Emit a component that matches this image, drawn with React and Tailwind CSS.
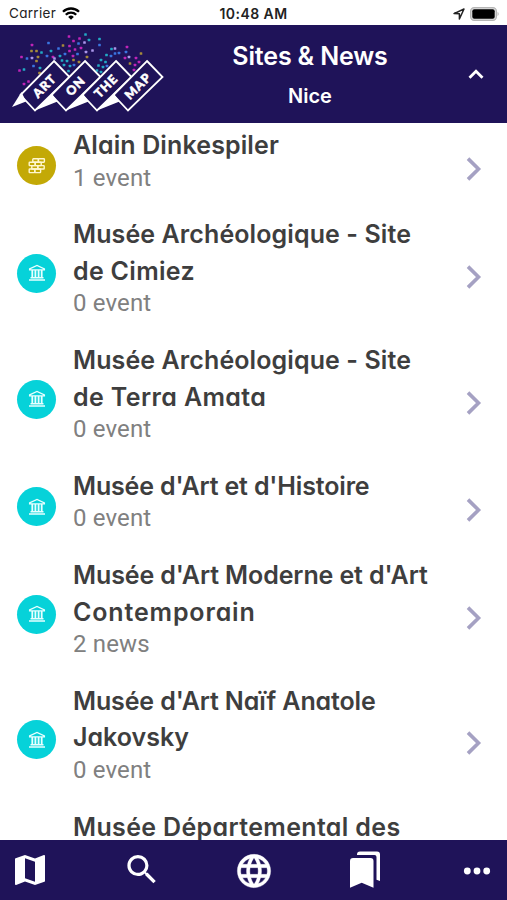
import React from 'react';

const C = { c: '#22a9c4', b: '#3a74e0', p: '#c024b8', y: '#a58a3a', l: '#ab97ea' };

// confetti above the logo: x, y, colour
const DOTS = [
  [32, 45, 'p'], [21.5, 57, 'p'], [19.5, 70.5, 'p'], [31.5, 51, 'y'], [36.5, 51, 'y'], [41.5, 52.5, 'c'], [27, 58.5, 'b'],
  [32, 58, 'l'], [38, 57, 'y'], [33.5, 66, 'b'], [24, 69.5, 'c'], [36.5, 61, 'y'], [40, 68, 'c'], [39.5, 73, 'y'], [24, 84, 'p'], [28.5, 81.5, 'p'],
  [48.5, 43, 'b'], [51, 51, 'c'], [53, 57, 'p'], [47, 56, 'b'], [54.5, 58.5, 'l'], [58.5, 48.5, 'b'], [63, 45.5, 'y'], [69, 36.5, 'p'],
  [69.5, 46, 'p'], [69.5, 51, 'p'], [60, 56, 'c'], [65, 54, 'b'], [62, 60.5, 'c'], [67, 61, 'c'], [64, 65, 'c'], [73.5, 41, 'p'],
  [79.5, 38.5, 'p'], [85.5, 34.5, 'c'], [89, 40, 'c'], [84.5, 42.5, 'l'], [78.5, 43.5, 'b'], [75, 49.5, 'p'], [81, 48, 'p'],
  [77.5, 54, 'b'], [73, 56, 'p'], [73.5, 60, 'y'], [79, 62, 'y'], [70, 66, 'c'], [68.5, 71, 'c'], [74, 65, 'b'], [86, 52, 'l'], [87, 57, 'y'],
  [92.5, 50.5, 'l'], [99.5, 39, 'c'], [99.5, 45, 'b'], [111.5, 49, 'c'], [115, 48.5, 'l'], [106.5, 55, 'c'], [111, 56, 'b'],
  [101, 60, 'c'], [105.5, 62, 'c'], [98.5, 65.5, 'c'], [103, 67, 'c'], [97, 70.5, 'c'], [101, 72, 'c'], [107, 66, 'b'],
  [127, 47, 'p'], [126, 52, 'b'], [115, 53.5, 'b'], [119, 53, 'b'], [141, 53.5, 'y'], [129, 57, 'l'], [136, 58, 'p'],
  [130, 63.5, 'y'], [135, 65, 'p'], [139, 62, 'p'], [134, 70, 'p'], [125, 58, 'p'],
];

const WORDS = [['ART', 44.5], ['ON', 75.5], ['THE', 106], ['MAP', 138]];

const Logo = () => (
  <svg viewBox="0 25 180 98" className="w-[180px] h-[98px] shrink-0">
    {DOTS.map(([x, y, c], i) => (
      <rect key={i} x={x - 1.3} y={y - 1.3} width="2.6" height="2.6" rx=".6" fill={C[c]} />
    ))}
    {[0, 31, 62, 93].map((dx) => (
      <g key={dx} transform={`translate(${dx} 0)`}>
        <path d="M54 61 69.5 77 35 110.5 20.5 95Z" fill="#1f1359" stroke="#fff" strokeWidth="1.8" />
      </g>
    ))}
    <path d="M12 107 21.5 92 26 101.5Z" fill="#fff" />
    {[31, 62, 93].map((dx) => (
      <path key={dx} d="M4 110.5 21 94 26.5 101.5Z" transform={`translate(${dx} 0)`} fill="#fff" />
    ))}
    {WORDS.map(([word, x]) => (
      <text
        key={word}
        transform={`translate(${x} 86) rotate(-45)`}
        y="4.4"
        textAnchor="middle"
        fill="#fff"
        stroke="#fff"
        strokeWidth=".5"
        className="font-['Lato'] font-black text-[12.5px] tracking-[1px]"
      >
        {word}
      </text>
    ))}
  </svg>
);

const MuseumIcon = () => (
  <svg viewBox="0 0 18 18" className="w-[18px] h-[18px]" fill="none" stroke="#e8ffff" strokeWidth="1.3">
    <path d="M1.6 4.9 9 1.5l7.4 3.4v.9H1.6Z" />
    <path d="M4.3 6v7.5M7.4 6v7.5M10.6 6v7.5M13.7 6v7.5" strokeWidth="1.8" />
    <path d="M2.5 13.8h13M1 16h16" strokeWidth="1.6" />
  </svg>
);

const BricksIcon = () => (
  <svg viewBox="0 0 18 18" className="w-[18px] h-[18px]" fill="none" stroke="#fff7cf" strokeWidth="1.4">
    <rect x="4.8" y="1.8" width="5.6" height="3.4" rx=".6" />
    <rect x="10.4" y="1.8" width="6" height="3.4" rx=".6" />
    <rect x="1.2" y="5.2" width="6" height="3.4" rx=".6" />
    <rect x="7.2" y="5.2" width="6" height="3.4" rx=".6" />
    <rect x="3.8" y="8.6" width="6" height="3.4" rx=".6" />
    <rect x="9.8" y="8.6" width="6.4" height="3.4" rx=".6" />
    <rect x="1.2" y="12" width="5.6" height="3.6" rx=".6" />
    <rect x="6.8" y="12" width="5.8" height="3.6" rx=".6" />
  </svg>
);

const SITES = [
  { lines: [['Alain Dinkespiler', 'tracking-[0.12px]']], sub: '1 event', artist: true },
  { lines: [['Musée Archéologique - Site', 'tracking-[0.1px]'], ['de Cimiez', 'tracking-[0.3px]']], sub: '0 event' },
  { lines: [['Musée Archéologique - Site', 'tracking-[0.1px]'], ['de Terra Amata', 'tracking-[0.38px]']], sub: '0 event' },
  { lines: [["Musée d'Art et d'Histoire", 'tracking-[-0.16px]']], sub: '0 event' },
  { lines: [["Musée d'Art Moderne et d'Art", 'tracking-[-0.11px]'], ['Contemporain', 'tracking-[0.85px]']], sub: '2 news' },
  { lines: [["Musée d'Art Naïf Anatole", 'tracking-[-0.13px]'], ['Jakovsky', 'tracking-[0px]']], sub: '0 event' },
];

const TitleLine = ({ text, tracking }) => (
  <div className="h-[36.5px] leading-[36.5px]">
    <span className={`text-[25px] font-semibold text-[#3e3e3e] ${tracking}`}>{text}</span>
  </div>
);

const SiteRow = ({ site }) => (
  <li className="flex items-center pl-[17px] pr-[25px] py-[11.4px]">
    <div className={`w-[39px] h-[39px] mt-[11px] rounded-full flex items-center justify-center shrink-0 ${site.artist ? 'bg-[#c3a906]' : 'bg-[#06d2d9]'}`}>
      {site.artist ? <BricksIcon /> : <MuseumIcon />}
    </div>
    <div className="ml-[17px] flex-1 whitespace-nowrap">
      {site.lines.map(([text, tracking]) => (
        <TitleLine key={text} text={text} tracking={tracking} />
      ))}
      <div className="h-[30px] leading-[29px] font-['Roboto'] text-[24px] tracking-[0.15px] text-[#808080]">{site.sub}</div>
    </div>
    <svg viewBox="0 0 16 24" className="w-4 h-6 mt-[18px] shrink-0" fill="none" stroke="#a5a1c3" strokeWidth="3.6">
      <path d="M2 1.6 12.5 12 2 22.4" />
    </svg>
  </li>
);

const StatusBar = () => (
  <div className="h-[25px] bg-white shrink-0 grid grid-cols-3 items-center px-[9px] pt-[2px] text-[13.5px] text-[#222]">
    <div className="flex items-center gap-[6px]">
      <span className="tracking-[0.3px]">Carrier</span>
      <svg viewBox="0 0 18 13" className="w-[18px] h-[13px]" fill="none" stroke="#000" strokeWidth="2.3">
        <path d="M1 4.8a11.4 11.4 0 0 1 16 0M3.8 7.8a7.4 7.4 0 0 1 10.4 0" />
        <path d="M9 12.8 6.2 9.9a4 4 0 0 1 5.6 0Z" fill="#000" stroke="none" />
      </svg>
    </div>
    <span className="text-center text-[14px] font-semibold tracking-[0.45px]">10:48 AM</span>
    <div className="flex items-center justify-end gap-[5px] -mr-[2px]">
      <svg viewBox="0 0 12 12" className="w-3 h-3" fill="none" stroke="#222" strokeWidth="1.5" strokeLinejoin="round">
        <path d="M11 1 6.4 11V5.8L1 5.6Z" />
      </svg>
      <svg viewBox="0 0 30 14" className="w-[30px] h-[14px]">
        <rect x=".6" y=".6" width="25.8" height="12.8" rx="3.6" fill="#ddd" stroke="#b5b5b5" strokeWidth="1.2" />
        <rect x="2.3" y="2.3" width="22.4" height="9.4" rx="2" fill="#000" />
        <path d="M27.6 4.8q2 2.2 0 4.4Z" fill="#aaa" />
      </svg>
    </div>
  </div>
);

const Header = () => (
  <header className="h-[98px] bg-[#1f1359] shrink-0 flex items-center text-white">
    <Logo />
    <div className="w-[260px] flex flex-col items-center font-semibold pt-[3px]">
      <h1 className="text-[25px] leading-[38px] tracking-[-0.15px]">Sites &amp; News</h1>
      <h2 className="text-[20px] leading-[38px] mt-[2px] tracking-[0px]">Nice</h2>
    </div>
    <svg viewBox="0 0 16 10" className="w-4 h-[10px] ml-[28px]" fill="none" stroke="#fff" strokeWidth="2.8">
      <path d="M1.5 8.7 8 2.2l6.5 6.5" />
    </svg>
  </header>
);

const NavBar = () => (
  <nav className="h-[60px] bg-[#1f1359] shrink-0 flex items-center justify-between px-[10px]">
    <svg viewBox="0 0 24 24" className="w-10 h-10" fill="#fff">
      <path d="m20.5 3-.16.03L15 5.1 9 3 3.36 4.9c-.21.07-.36.25-.36.48V20.5c0 .28.22.5.5.5l.16-.03L9 18.9l6 2.1 5.64-1.9c.21-.07.36-.25.36-.48V3.5c0-.28-.22-.5-.5-.5zM15 19l-6-2.11V5l6 2.11V19z" />
    </svg>
    <svg viewBox="0 0 24 24" className="w-10 h-[39px] -mt-[2px]" fill="#fff">
      <path d="M15.5 14h-.79l-.28-.27A6.47 6.47 0 0 0 16 9.5 6.5 6.5 0 1 0 9.5 16c1.61 0 3.09-.59 4.23-1.57l.27.28v.79l5 4.99L20.49 19l-4.99-5zm-6 0C7.01 14 5 11.99 5 9.5S7.01 5 9.5 5 14 7.01 14 9.5 11.99 14 9.5 14z" />
    </svg>
    <svg viewBox="0 0 24 24" className="w-10 h-10 mt-[1px]" fill="#fff" stroke="#fff" strokeWidth=".2">
      <path d="M11.99 2C6.47 2 2 6.48 2 12s4.47 10 9.99 10C17.52 22 22 17.52 22 12S17.52 2 11.99 2zm6.93 6h-2.95a15.65 15.65 0 0 0-1.38-3.56A8.03 8.03 0 0 1 18.92 8zM12 4.04c.83 1.2 1.48 2.53 1.91 3.96h-3.82c.43-1.43 1.08-2.76 1.91-3.96zM4.26 14C4.1 13.36 4 12.69 4 12s.1-1.36.26-2h3.38c-.08.66-.14 1.32-.14 2s.06 1.34.14 2H4.26zm.82 2h2.95c.32 1.25.78 2.45 1.38 3.56A7.99 7.99 0 0 1 5.08 16zm2.95-8H5.08a7.99 7.99 0 0 1 4.33-3.56A15.65 15.65 0 0 0 8.03 8zM12 19.96c-.83-1.2-1.48-2.53-1.91-3.96h3.82c-.43 1.43-1.08 2.76-1.91 3.96zM14.34 14H9.66c-.09-.66-.16-1.32-.16-2s.07-1.35.16-2h4.68c.09.65.16 1.32.16 2s-.07 1.34-.16 2zm.25 5.56c.6-1.11 1.06-2.31 1.38-3.56h2.95a8.03 8.03 0 0 1-4.33 3.56zM16.36 14c.08-.66.14-1.32.14-2s-.06-1.34-.14-2h3.38c.16.64.26 1.31.26 2s-.1 1.36-.26 2h-3.38z" />
    </svg>
    <svg viewBox="0 0 30 37" className="w-10 h-[37px] -mt-[1px]" fill="#fff">
      <path d="M7 3.5Q7 .5 10 .5h17q3 0 3 3V30l-3.5-1.3V6q0-2-2-2H7Z" />
      <path d="M0 10q0-3 3-3h17.5q3 0 3 3v26.8L11.7 31.8 0 36.8Z" />
    </svg>
    <svg viewBox="0 0 40 40" className="w-10 h-10 mt-[1px]" fill="#fff">
      <circle cx="10.3" cy="20" r="3.4" />
      <circle cx="20" cy="20" r="3.4" />
      <circle cx="29.7" cy="20" r="3.4" />
    </svg>
  </nav>
);

export default function App() {
  return (
    <div className="w-[507px] h-[900px] bg-white flex flex-col overflow-hidden font-['Inter',sans-serif] [font-feature-settings:'cv11']">
      <StatusBar />
      <Header />
      <main className="flex-1 min-h-0 overflow-hidden">
        <ul className="-mt-[7.4px]">
          {SITES.map((site, i) => (
            <SiteRow key={i} site={site} />
          ))}
          {/* next entry, only its first line is scrolled into view */}
          <li className="pl-[73px] pt-[11.4px] whitespace-nowrap">
            <TitleLine text="Musée Départemental des" tracking="tracking-[0.35px]" />
          </li>
        </ul>
      </main>
      <NavBar />
    </div>
  );
}
